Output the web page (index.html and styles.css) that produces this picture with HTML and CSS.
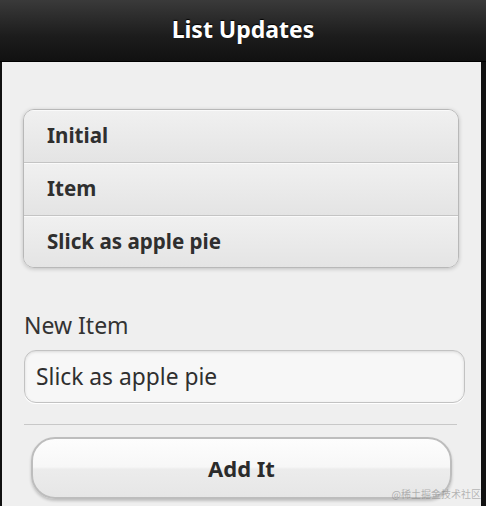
FILE: index.html
```html
<!DOCTYPE html>
<html lang="en">
<head>
  <meta charset="UTF-8">
  <meta name="viewport" content="width=device-width, initial-scale=1.0">
  <title>List Updates</title>
  <link rel="stylesheet" href="styles.css">
</head>
<body>
  <div class="page">
    <div class="header">
      <h1>List Updates</h1>
    </div>

    <div class="content">
      <ul class="list">
        <li>Initial</li>
        <li>Item</li>
        <li>Slick as apple pie</li>
      </ul>

      <label class="field-label" for="newItem">New Item</label>
      <input class="field-input" type="text" id="newItem" value="Slick as apple pie">

      <hr class="divider">

      <button class="btn-add">Add It</button>
    </div>

    <div class="watermark">@稀土掘金技术社区</div>
  </div>
</body>
</html>
```

FILE: styles.css
```css
* {
  margin: 0;
  padding: 0;
  box-sizing: border-box;
}

body {
  font-family: "Noto Sans", "Open Sans", sans-serif;
  background: #111;
  color: #333;
  width: 486px;
  height: 506px;
  overflow: hidden;
}

.page {
  position: relative;
  margin-left: 2px;
  width: 479px;
  height: 506px;
  background: #efefef;
}

.header {
  height: 62px;
  margin-left: -2px;
  width: 486px;
  background: linear-gradient(#3a3a3a, #1c1c1c 60%, #111);
  border-bottom: 1px solid #000;
  display: flex;
  justify-content: center;
  align-items: center;
}

.header h1 {
  font-size: 23px;
  font-weight: 700;
  color: #fff;
  text-shadow: 0 -1px 1px #000;
  margin-top: -4px;
}

.content {
  padding: 47px 0 0 21px;
}

.list {
  list-style: none;
  width: 436px;
  border: 1px solid #b8b8b8;
  border-radius: 11px;
  overflow: hidden;
  box-shadow: 0 1px 4px rgba(0, 0, 0, 0.2);
}

.list li {
  height: 53px;
  padding-left: 23px;
  padding-bottom: 3px;
  display: flex;
  align-items: center;
  font-size: 20.6px;
  font-weight: 700;
  color: #2f2f2f;
  background: linear-gradient(#f0f0f0, #e4e4e4);
  border-top: 1px solid #fafafa;
  border-bottom: 1px solid #c4c4c4;
}

.list li:last-child {
  border-bottom: none;
  height: 51px;
}

.field-label {
  display: block;
  margin-top: 43px;
  margin-left: 1px;
  font-size: 23px;
  color: #333;
  line-height: 28px;
}

.field-input {
  display: block;
  margin-top: 11px;
  margin-left: 1px;
  width: 441px;
  height: 53px;
  padding: 0 11px;
  font-family: inherit;
  font-size: 22.8px;
  color: #2f2f2f;
  background: #f7f7f7;
  border: 1px solid #c2c2c2;
  border-radius: 12px;
  box-shadow: inset 0 1px 3px rgba(0, 0, 0, 0.12), 0 1px 0 #fff;
  outline: none;
}

.divider {
  margin: 21px 0 0 1px;
  width: 433px;
  border: none;
  border-top: 1px solid #c8c8c8;
}

.btn-add {
  display: block;
  margin: 12px 0 0 8px;
  width: 421px;
  height: 62px;
  font-family: inherit;
  font-size: 22px;
  font-weight: 700;
  color: #2b2b2b;
  background: linear-gradient(#fdfdfd, #f7f7f7 48%, #ececec 52%, #e6e6e6);
  border: 2px solid #bdbdbd;
  border-radius: 24px;
  box-shadow: 0 2px 3px rgba(0, 0, 0, 0.2);
}

.watermark {
  position: absolute;
  right: 0;
  bottom: 5px;
  font-family: "Noto Sans CJK SC", sans-serif;
  font-size: 10px;
  color: rgba(120, 120, 120, 0.5);
}
```
